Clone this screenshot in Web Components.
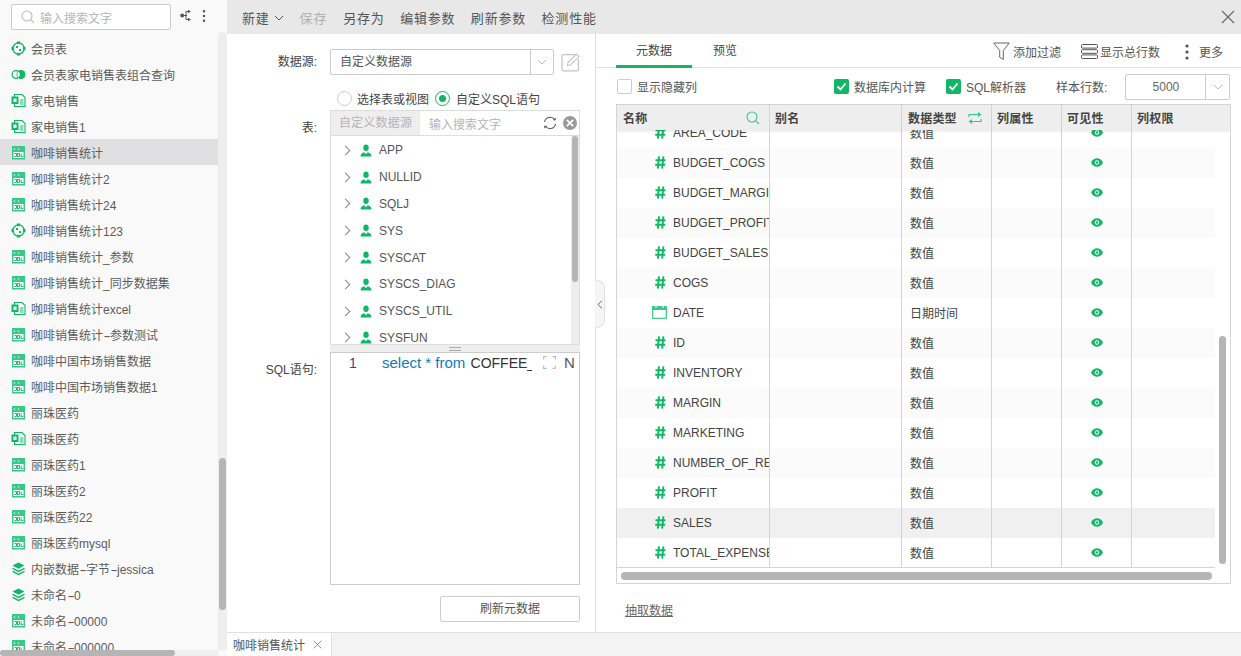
<!DOCTYPE html>
<html lang="zh">
<head>
<meta charset="utf-8">
<title>数据集</title>
<style>
  html, body { margin: 0; height: 100%; overflow: hidden; }
  body { font: 12px "Liberation Sans", "Noto Sans CJK SC", sans-serif; color: #555; background: #fff; }
</style>
</head>
<body>
<app-shell></app-shell>
<script>
const G = '#10b866';
const icons = {
  target: `<svg width="15" height="15" viewBox="0 0 15 15"><circle cx="7.5" cy="7.5" r="5.6" fill="none" stroke="${G}" stroke-width="1.3"/><g fill="${G}"><rect x="5.8" y="0.5" width="3.4" height="2.6"/><rect x="5.8" y="11.9" width="3.4" height="2.6"/><rect x="0.5" y="5.8" width="2.6" height="3.4"/><rect x="11.9" y="5.8" width="2.6" height="3.4"/><rect x="5" y="5" width="2" height="2"/><rect x="8" y="8" width="2" height="2"/></g></svg>`,
  join: `<svg width="15" height="15" viewBox="0 0 15 15"><circle cx="5" cy="7.5" r="3.9" fill="none" stroke="${G}" stroke-width="1.2"/><circle cx="10" cy="7.5" r="4.5" fill="${G}"/><path d="M7.5 4.6a3.9 3.9 0 0 1 0 5.8a3.9 3.9 0 0 1 0-5.8z" fill="#fff"/></svg>`,
  doc: `<svg width="15" height="15" viewBox="0 0 15 15"><path d="M3.5 1.5h7.5l3 3v9h-10.500z" fill="#fff" stroke="${G}" stroke-width="1.100"/><rect x="0.500" y="3.500" width="7" height="7.500" fill="${G}"/><rect x="2.500" y="5.500" width="3" height="3.500" fill="#fff"/><path d="M9 7h3.500M9 9h3.500M9 11h3.500" stroke="${G}"/></svg>`,
  sql: `<svg width="15" height="15" viewBox="0 0 15 15"><rect x="1" y="1" width="13" height="13.500" fill="#36c987"/><rect x="2.500" y="7" width="10" height="6" fill="#fff"/><path d="M3.500 8.500h2v3h-2M6.500 8.500v3h2v-3zM10 8.500v3h2" fill="none" stroke="#1aa868" stroke-width="0.900"/><path d="M4 3.200l-1 1 1 1M7 3.200l1 1-1 1" fill="none" stroke="#fff" stroke-width="0.800"/></svg>`,
  layers: `<svg width="15" height="15" viewBox="0 0 15 15"><path d="M7.500 1.500l6 3.100-6 3.100-6-3.100z" fill="${G}"/><path d="M1.500 7.400l6 3 6-3M1.500 10.400l6 3 6-3" fill="none" stroke="${G}" stroke-width="1.300"/></svg>`,
  search: `<svg width="14" height="14" viewBox="0 0 14 14"><circle cx="6" cy="6" r="5" fill="none" stroke="#bbb" stroke-width="1.100"/><path d="M9.700 9.700l3.300 3.300" stroke="#bbb" stroke-width="1.100"/></svg>`,
  chevron: `<svg width="10" height="6" viewBox="0 0 10 6"><path d="M1 1l4 4 4-4" fill="none" stroke="currentColor"/></svg>`,
  user: `<svg width="12" height="13" viewBox="0 0 12 13"><ellipse cx="6" cy="3.800" rx="2.700" ry="3.300" fill="${G}"/><path d="M0.500 12.500c0-3 2-4 3.800-4.300l1.700 2 1.700-2c1.800.3 3.800 1.300 3.800 4.300z" fill="${G}"/></svg>`,
  hash: `<svg width="11" height="13" viewBox="0 0 11 13"><path d="M4 .3L2.800 12.700M8.400 .3L7.200 12.700M.5 4.300h10M.2 8.700h10" fill="none" stroke="${G}" stroke-width="1.900"/></svg>`,
  cal: `<svg width="15" height="14" viewBox="0 0 15 14"><rect x=".7" y="1.700" width="13.600" height="11.600" fill="none" stroke="#36c987" stroke-width="1.200"/><rect x=".7" y="1.700" width="13.600" height="3.300" fill="#36c987"/><path d="M4 .5v2.500M11 .5v2.500" stroke="#fff" stroke-width="1"/></svg>`,
  eye: `<svg width="12" height="9" viewBox="0 0 12 9"><path d="M0 4.500C1.500 1.500 3.700.3 6 .3s4.500 1.200 6 4.200c-1.500 3-3.700 4.200-6 4.200S1.500 7.500 0 4.500z" fill="${G}"/><circle cx="6" cy="4.500" r="2.200" fill="#fff"/><circle cx="6" cy="4.500" r="1.200" fill="${G}"/></svg>`,
  check: `<svg width="15" height="15" viewBox="0 0 15 15"><rect width="15" height="15" rx="2" fill="${G}"/><path d="M3.500 7.500l3 3 5-6" fill="none" stroke="#fff" stroke-width="1.800"/></svg>`,
  filter: `<svg width="17" height="19" viewBox="0 0 17 19"><path d="M.7 1h15.600l-6 7.500v9l-3.600-2.200V8.500z" fill="none" stroke="#666"/></svg>`,
  rows: `<svg width="17" height="15" viewBox="0 0 17 15"><g fill="none" stroke="#555"><rect x=".5" y=".5" width="16" height="3.600" rx="1"/><rect x=".5" y="5.700" width="16" height="3.600" rx="1"/><rect x=".5" y="10.900" width="16" height="3.600" rx="1"/></g></svg>`,
  dots: `<svg width="4" height="16" viewBox="0 0 4 16"><g fill="#555"><circle cx="2" cy="2" r="1.600"/><circle cx="2" cy="8" r="1.600"/><circle cx="2" cy="14" r="1.600"/></g></svg>`,
  close: `<svg width="14" height="14" viewBox="0 0 14 14"><path d="M1 1l12 12M13 1L1 13" stroke="#666" stroke-width="1.100"/></svg>`,
  edit: `<svg width="19" height="19" viewBox="0 0 19 19"><path d="M14 1.500H2.500a1.500 1.500 0 0 0-1.500 1.500v13.500a1.500 1.500 0 0 0 1.500 1.500h13.500a1.500 1.500 0 0 0 1.500-1.500V6" fill="none" stroke="#c4c4c4" stroke-width="1.300"/><path d="M7 9.500L15.500 1l2.500 2.500L9.500 12l-3 .5z" fill="none" stroke="#c4c4c4" stroke-width="1.100"/></svg>`,
  refresh: `<svg width="14" height="14" viewBox="0 0 14 14"><path d="M1.500 6A5.600 5.600 0 0 1 11.800 4M12.500 8A5.600 5.600 0 0 1 2.200 10" fill="none" stroke="#555" stroke-width="1.100"/><path d="M9.800 4.300h3V1.500zM4.200 9.700h-3v2.800z" fill="#555"/></svg>`,
  clear: `<svg width="14" height="14" viewBox="0 0 14 14"><circle cx="7" cy="7" r="7" fill="#999"/><path d="M3.800 3.800l6.400 6.400M10.200 3.800l-6.400 6.400" stroke="#fff" stroke-width="1.700"/></svg>`,
  swap: `<svg width="14" height="12" viewBox="0 0 14 12"><path d="M1 5V2.500h11M13 7v2.500H2" fill="none" stroke="#36c987" stroke-width="1.200"/><path d="M10 0l3.500 2.500L10 5zM4 7L.5 9.500 4 12z" fill="#36c987"/></svg>`,
  tree: `<svg width="13" height="13" viewBox="0 0 13 13"><circle cx="3.200" cy="6.500" r="2" fill="#555"/><path d="M5 6.500h3M7 2.500v8M7 2.500h2M7 10.500h2" fill="none" stroke="#555"/><path d="M9 .8l3 1.700-3 1.700zM9 8.800l3 1.700-3 1.700z" fill="#555"/></svg>`,
  arrow: `<svg width="9" height="14" viewBox="0 0 9 14"><path d="M7.500 1L1.500 7l6 6" fill="none" stroke="#555" stroke-width="1.400"/></svg>`,
  focus: `<svg width="13" height="13" viewBox="0 0 13 13"><g fill="none" stroke-width="1.200"><path d="M.6 3.500V.6h2.900" stroke="#e8b88a"/><path d="M9.500.6h2.900v2.900" stroke="#9cc4e4"/><path d="M12.400 9.500v2.900H9.500" stroke="#e8b88a"/><path d="M3.500 12.400H.6V9.500" stroke="#9cc4e4"/></g></svg>`
};

class ListItem extends HTMLElement {
  connectedCallback() {
    const root = this.attachShadow({ mode: 'open' });
    root.innerHTML = `<style>
      :host { display: flex; align-items: center; height: 26px; padding-left: 11px; white-space: nowrap; color: #5c5c5c; }
      :host([active]) { background: #e0e0e2; }
      svg { flex: none; margin-right: 5px; }
    </style>${icons[this.getAttribute('icon')]}<span><slot></slot></span>`;
  }
}
customElements.define('list-item', ListItem);

class SideBar extends HTMLElement {
  constructor() {
    super();
    this.attachShadow({ mode: 'open' });
    this.shadowRoot.innerHTML = `<style>
      :host { display: flex; flex-direction: column; width: 227px; flex: none; height: 656px; background: #f9f9f9; position: relative; overflow: hidden; }
      .top { display: flex; align-items: center; height: 35px; padding-left: 11px; box-sizing: border-box; flex: none; }
      .search { display: flex; align-items: center; gap: 5px; width: 160px; height: 26px; box-sizing: border-box; padding-left: 9px; background: #fff; border: 1px solid #ccc; border-radius: 2px; color: #b5b5b5; margin-top: -1px; }
      .tools { display: flex; align-items: center; margin: -4px 0 0 8px; gap: 10px; }
      .tools svg:last-child { transform: scale(.8); }
      .body { flex: 1; display: flex; min-height: 0; }
      .list { width: 218px; overflow: hidden; }
      .track { width: 9px; background: #eee; border-radius: 5px 5px 0 0; position: relative; margin-top: -3px; margin-bottom: 6px; }
      .thumb { position: absolute; left: 1px; top: 426px; width: 7px; height: 152px; border-radius: 4px; background: #b5b5b5; }
      .hbar { position: absolute; left: 0; right: 9px; bottom: 0; height: 6px; background: #f0f0f0; }
      .hbar i { display: block; width: 175px; height: 6px; border-radius: 3px; background: #b5b5b5; }
    </style>
    <div class="top">
      <div class="search">${icons.search}<span>输入搜索文字</span></div>
      <div class="tools">${icons.tree}${icons.dots}</div>
    </div>
    <div class="body"><div class="list"><slot></slot></div><div class="track"><div class="thumb"></div></div></div>
    <div class="hbar"><i></i></div>`;
  }
}
customElements.define('side-bar', SideBar);

class TopBar extends HTMLElement {
  constructor() {
    super();
    this.attachShadow({ mode: 'open' });
    this.shadowRoot.innerHTML = `<style>
      :host { display: flex; align-items: center; height: 34px; flex: none; background: #e8e8e8; padding-left: 15px; font-size: 13px; letter-spacing: .8px; color: #555; }
      span { margin-right: 15.500px; }
      .new { display: flex; align-items: center; gap: 4px; margin-right: 16px; }
      .new svg { margin-top: 1px; }
      .off { color: #b0b0b0; margin-right: 16px; }
      .x { margin-left: auto; margin-right: 6px; display: flex; }
    </style>
    <span class="new">新建 ${icons.chevron}</span><span class="off">保存</span><span>另存为</span><span>编辑参数</span><span>刷新参数</span><span>检测性能</span>
    <div class="x">${icons.close}</div>`;
  }
}
customElements.define('top-bar', TopBar);

class SourceForm extends HTMLElement {
  constructor() {
    super();
    this.attachShadow({ mode: 'open' });
    const schemas = ['APP', 'NULLID', 'SQLJ', 'SYS', 'SYSCAT', 'SYSCS_DIAG', 'SYSCS_UTIL', 'SYSFUN'];
    this.shadowRoot.innerHTML = `<style>
      :host { display: grid; grid-template-columns: 90px 250px; column-gap: 13px; grid-template-rows: 26px 35px 235px auto; width: 369px; box-sizing: border-box; flex: none; padding-top: 15px; border-right: 1px solid #ddd; color: #555; align-content: start; }
      .lb { text-align: right; color: #444; line-height: 26px; }
      .lb.t { padding-top: 5px; }
      .lb.s { padding-top: 12px; }
      .row1 { display: flex; align-items: center; gap: 7px; }
      .drop { display: flex; width: 225px; height: 26px; box-sizing: border-box; border: 1px solid #ccc; border-radius: 2px; align-items: stretch; }
      .drop b { flex: 1; font-weight: normal; line-height: 24px; padding-left: 9px; }
      .drop i { width: 22px; border-left: 1px solid #ccc; display: flex; align-items: center; justify-content: center; color: #bbb; }
      .radios { grid-column: 2; display: flex; align-items: center; padding-left: 7px; height: 18px; align-self: end; margin-bottom: 3px; white-space: nowrap; color: #444; }
      .radio { width: 13px; height: 13px; border: 1px solid #ccc; border-radius: 50%; margin-right: 5px; flex: none; }
      .radio.on { border-color: ${G}; position: relative; margin: 0 6px 0 6px; }
      .radio.on::after { content: ""; position: absolute; inset: 3px; background: ${G}; border-radius: 50%; }
      .tbl { border: 1px solid #ddd; height: 235px; box-sizing: border-box; display: flex; flex-direction: column; position: relative; overflow: hidden; }
      .hd { display: flex; align-items: center; height: 24px; flex: none; border-bottom: 1px solid #ddd; }
      .hd b { font-weight: normal; width: 89px; background: #eee; color: #b5b5b5; line-height: 24px; text-align: center; letter-spacing: .2px; }
      .hd span { margin-left: 9px; color: #b5b5b5; flex: 1; }
      .hd svg { margin-right: 3px; }
      .hd svg:last-child { margin-left: 3px; margin-right: 2px; }
      .tree { flex: 1; overflow: hidden; padding-top: 1px; }
      .node { display: flex; align-items: center; height: 26.800px; padding-left: 11px; color: #555; }
      .node em { width: 6px; height: 6px; border: solid #888; border-width: 1px 1px 0 0; transform: rotate(45deg); margin-right: 11px; flex: none; }
      .node svg { margin-right: 7px; }
      .vs { position: absolute; right: 0; top: 25px; bottom: 0; width: 8px; background: #eee; }
      .vs i { display: block; margin: 0 1px; height: 146px; border-radius: 3px; background: #b5b5b5; }
      .ed-wrap { grid-column: 2; display: flex; flex-direction: column; }
      .grip { height: 7px; background: #eee; display: flex; justify-content: center; align-items: center; flex: none; }
      .grip i { width: 12px; height: 2px; border: solid #aaa; border-width: 1px 0; }
      .ed { height: 233px; box-sizing: border-box; border: 1px solid #ccc; display: flex; font-size: 15px; line-height: 20px; position: relative; white-space: nowrap; overflow: hidden; }
      .ln { width: 51px; padding-left: 18px; box-sizing: border-box; color: #1f4e8c; flex: none; font-size: 14px; }
      .code { width: 150px; overflow: hidden; color: #333; }
      .code b { font-weight: normal; color: #0c7cba; }
      .code span { font-size: 14px; margin-left: 1px; }
      .mid { margin: 3px 8px 0 11px; flex: none; height: 13px; display: flex; }
      .btn { height: 26px; width: 140px; margin: 11px 0 0 110px; box-sizing: border-box; border: 1px solid #ccc; border-radius: 2px; text-align: center; line-height: 24px; color: #555; }
    </style>
    <div class="lb">数据源:</div>
    <div class="row1"><div class="drop"><b>自定义数据源</b><i>${icons.chevron}</i></div>${icons.edit}</div>
    <div class="radios"><span class="radio"></span>选择表或视图<span class="radio on"></span>自定义SQL语句</div>
    <div class="lb t" style="grid-column:1;grid-row:3">表:</div>
    <div style="grid-column:2;grid-row:3">
      <div class="tbl">
        <div class="hd"><b>自定义数据源</b><span>输入搜索文字</span>${icons.refresh}${icons.clear}</div>
        <div class="tree">${schemas.map(s => `<div class="node"><em></em>${icons.user}${s}</div>`).join('')}</div>
        <div class="vs"><i></i></div>
      </div>
    </div>
    <div class="lb s" style="grid-column:1;grid-row:4">SQL语句:</div>
    <div class="ed-wrap" style="grid-row:4">
      <div class="grip"><i></i></div>
      <div class="ed"><div class="ln">1</div><div class="code"><b>select * from</b> <span>COFFEE_CHAIN</span></div><div class="mid">${icons.focus}</div><div>N</div></div>
      <div class="btn">刷新元数据</div>
    </div>`;
  }
}
customElements.define('source-form', SourceForm);

class MetaTable extends HTMLElement {
  constructor() {
    super();
    this.attachShadow({ mode: 'open' });
    const rows = [['AREA_CODE'], ['BUDGET_COGS'], ['BUDGET_MARGIN'], ['BUDGET_PROFIT'], ['BUDGET_SALES'], ['COGS'], ['DATE', 'date'], ['ID'], ['INVENTORY'], ['MARGIN'], ['MARKETING'], ['NUMBER_OF_RECORDS'], ['PROFIT'], ['SALES', 'hot'], ['TOTAL_EXPENSES']];
    const cols = '153px 132px 90px 70px 70px 85px';
    this.shadowRoot.innerHTML = `<style>
      :host { display: block; height: 480px; border: 1px solid #d4d4d4; box-sizing: border-box; position: relative; overflow: hidden; margin: 0 10px 0 20px; }
      .h, .r { display: grid; grid-template-columns: ${cols}; }
      .h { height: 25px; background: #eee; position: relative; z-index: 1; box-shadow: 0 1px 3px rgba(0,0,0,.12); box-sizing: border-box; font-weight: bold; color: #444; letter-spacing: .2px; }
      .h div { display: flex; align-items: center; padding-left: 5px; border-right: 1px solid #d4d4d4; }
      .h div:nth-child(1), .h div:nth-child(3) { padding-left: 6px; }
      .h svg { margin-left: auto; margin-right: 9px; }
      .body { height: 438px; width: 598px; overflow: hidden; border-bottom: 1px solid #d4d4d4; box-sizing: border-box; }
      .wrap { margin-top: -12px; }
      .r { height: 30px; }
      .r:nth-child(even) { background: #fbfbfb; }
      .r.hot { background: #f0f0f0; }
      .r > div { display: flex; align-items: center; border-right: 1px solid #d4d4d4; overflow: hidden; white-space: nowrap; color: #444; min-width: 0; }
      .r > div:last-child { border-right: 0; }
      .name { padding-left: 37px; }
      .ic { width: 19px; flex: none; display: flex; justify-content: flex-start; margin-top: -2px; }
      .ic svg { margin-left: 1px; }
      .ic.cal svg { margin-left: -2px; }
      .ty { padding: 0 0 2px 8px; }
      .vis { justify-content: center; padding-bottom: 1px; }
      .vs { position: absolute; right: 4px; top: 231px; width: 7px; height: 228px; border-radius: 4px; background: #b5b5b5; }
      .hs { position: absolute; left: 4px; top: 467px; width: 591px; height: 8px; border-radius: 4px; background: #b5b5b5; }
    </style>
    <div class="h">
      <div>名称 ${icons.search.replace(/#bbb/g, '#36c987')}</div><div>别名</div><div>数据类型 ${icons.swap}</div><div>列属性</div><div>可见性</div><div style="border-right:0">列权限</div>
    </div>
    <div class="body"><div class="wrap">${rows.map(([n, k]) => `<div class="r ${k === 'hot' ? 'hot' : ''}">
      <div class="name"><span class="ic ${k === 'date' ? 'cal' : ''}">${k === 'date' ? icons.cal : icons.hash}</span><span>${n}</span></div>
      <div></div><div class="ty">${k === 'date' ? '日期时间' : '数值'}</div><div></div><div class="vis">${icons.eye}</div><div></div>
    </div>`).join('')}</div></div>
    <div class="vs"></div><div class="hs"></div>`;
  }
}
customElements.define('meta-table', MetaTable);

class MetaPanel extends HTMLElement {
  constructor() {
    super();
    this.attachShadow({ mode: 'open' });
    this.shadowRoot.innerHTML = `<style>
      :host { display: flex; flex-direction: column; flex: 1; min-width: 0; color: #555; position: relative; }
      .tabs { display: flex; height: 34px; flex: none; border-bottom: 1px solid #e4e4e4; box-sizing: border-box; padding-left: 20px; align-items: stretch; }
      .tab { width: 76px; text-align: center; line-height: 34px; box-sizing: border-box; color: #444; }
      .tab.on { border-bottom: 3px solid ${G}; height: 34px; }
      .tab + .tab { width: 66px; }
      .acts { margin-left: auto; display: flex; align-items: center; padding-right: 18px; margin-top: 2px; }
      .acts span { display: flex; align-items: center; gap: 3px; }
      .acts span + span { margin-left: 20px; gap: 2px; }
      .acts span:last-child { margin-left: 25px; gap: 10px; }
      .opts { display: flex; align-items: center; height: 36px; flex: none; padding-left: 21px; padding-right: 10px; white-space: nowrap; }
      .box { width: 13px; height: 13px; border: 1px solid #ccc; border-radius: 2px; margin-right: 5px; }
      .chk { display: flex; align-items: center; gap: 5px; }
      .chk.a { margin-left: 137px; }
      .chk.b { margin-left: 20px; }
      .smp { margin-left: 30px; }
      .num { margin: 1px 0 0 18px; width: 105px; height: 26px; box-sizing: border-box; border: 1px solid #ccc; border-radius: 2px; display: flex; line-height: 24px; color: #666; }
      .num b { flex: 1; font-weight: normal; text-align: center; }
      .num i { width: 23px; border-left: 1px solid #ccc; display: flex; align-items: center; justify-content: center; color: #bbb; }
      .ext { margin: 17px 0 0 29px; text-decoration: underline; color: #666; }
    </style>
    <div class="tabs"><div class="tab on">元数据</div><div class="tab">预览</div>
      <div class="acts"><span>${icons.filter}添加过滤</span><span>${icons.rows}显示总行数</span><span>${icons.dots}更多</span></div>
    </div>
    <div class="opts"><span class="box"></span>显示隐藏列<span class="chk a">${icons.check}数据库内计算</span><span class="chk b">${icons.check}SQL解析器</span><span class="smp">样本行数:</span><div class="num"><b>5000</b><i>${icons.chevron}</i></div></div>
    <slot></slot>
    <div class="ext">抽取数据</div>`;
  }
}
customElements.define('meta-panel', MetaPanel);

class DockTabs extends HTMLElement {
  constructor() {
    super();
    this.attachShadow({ mode: 'open' });
    this.shadowRoot.innerHTML = `<style>
      :host { display: flex; height: 24px; flex: none; background: #f3f3f3; border-top: 1px solid #e0e0e0; box-sizing: border-box; }
      .t { display: flex; align-items: center; width: 105px; box-sizing: border-box; background: #fff; border-right: 1px solid #e0e0e0; padding-left: 6px; color: #555; }
      svg { width: 9px; height: 9px; margin-left: 8px; }
    </style><div class="t">咖啡销售统计${icons.close}</div>`;
  }
}
customElements.define('dock-tabs', DockTabs);

class AppShell extends HTMLElement {
  constructor() {
    super();
    const items = [['target', '会员表'], ['join', '会员表家电销售表组合查询'], ['doc', '家电销售'], ['doc', '家电销售1'], ['sql', '咖啡销售统计', 1], ['sql', '咖啡销售统计2'], ['sql', '咖啡销售统计24'], ['target', '咖啡销售统计123'], ['sql', '咖啡销售统计_参数'], ['sql', '咖啡销售统计_同步数据集'], ['doc', '咖啡销售统计excel'], ['sql', '咖啡销售统计-参数测试'], ['sql', '咖啡中国市场销售数据'], ['sql', '咖啡中国市场销售数据1'], ['sql', '丽珠医药'], ['doc', '丽珠医药'], ['sql', '丽珠医药1'], ['sql', '丽珠医药2'], ['sql', '丽珠医药22'], ['sql', '丽珠医药mysql'], ['layers', '内嵌数据-字节-jessica'], ['layers', '未命名-0'], ['sql', '未命名-00000'], ['sql', '未命名-000000']];
    // the hyphen is wider in the reference font
    const label = t => t.replace(/-/g, '<span style="display:inline-block;margin:0 1.5px;transform:scaleX(1.8)">-</span>');
    this.attachShadow({ mode: 'open' });
    this.shadowRoot.innerHTML = `<style>
      :host { display: flex; width: 1241px; height: 656px; overflow: hidden; }
      .main { flex: 1; min-width: 0; display: flex; flex-direction: column; }
      .work { flex: 1; min-height: 0; display: flex; position: relative; }
      .handle { position: absolute; left: 368px; top: 246px; width: 10px; height: 48px; box-sizing: border-box; background: #f5f5f5; border: 1px solid #e2e2e2; border-left: 0; border-radius: 0 8px 8px 0; display: flex; align-items: center; justify-content: center; }
      .handle svg { width: 6px; height: 9px; }
    </style>
    <side-bar>${items.map(([i, t, a]) => `<list-item icon="${i}"${a ? ' active' : ''}>${label(t)}</list-item>`).join('')}</side-bar>
    <div class="main">
      <top-bar></top-bar>
      <div class="work"><source-form></source-form><meta-panel><meta-table></meta-table></meta-panel><div class="handle">${icons.arrow}</div></div>
      <dock-tabs></dock-tabs>
    </div>`;
  }
}
customElements.define('app-shell', AppShell);
</script>
</body>
</html>
